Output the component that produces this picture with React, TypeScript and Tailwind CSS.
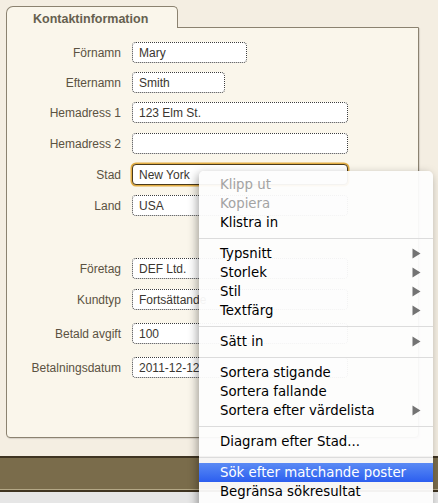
import React from 'react';

type Field = { label: string; value: string; width: string; mt: string; focused?: boolean };

const fields: Field[] = [
  { label: 'Förnamn', value: 'Mary', width: 'w-[115px]', mt: 'mt-0' },
  { label: 'Efternamn', value: 'Smith', width: 'w-[93px]', mt: 'mt-[9px]' },
  { label: 'Hemadress 1', value: '123 Elm St.', width: 'w-[216px]', mt: 'mt-[9px]' },
  { label: 'Hemadress 2', value: '', width: 'w-[216px]', mt: 'mt-[10px]' },
  { label: 'Stad', value: 'New York', width: 'w-[216px]', mt: 'mt-[10px]', focused: true },
  { label: 'Land', value: 'USA', width: 'w-[216px]', mt: 'mt-[10px]' },
  { label: 'Företag', value: 'DEF Ltd.', width: 'w-[216px]', mt: 'mt-[42px]' },
  { label: 'Kundtyp', value: 'Fortsättande', width: 'w-[216px]', mt: 'mt-[10px]' },
  { label: 'Betald avgift', value: '100', width: 'w-[216px]', mt: 'mt-[13px]' },
  { label: 'Betalningsdatum', value: '2011-12-12', width: 'w-[216px]', mt: 'mt-[13px]' },
];

type Item =
  | { sep: true }
  | { sep?: false; label: string; disabled?: boolean; sub?: boolean; active?: boolean };

const menu: Item[] = [
  { label: 'Klipp ut', disabled: true },
  { label: 'Kopiera', disabled: true },
  { label: 'Klistra in' },
  { sep: true },
  { label: 'Typsnitt', sub: true },
  { label: 'Storlek', sub: true },
  { label: 'Stil', sub: true },
  { label: 'Textfärg', sub: true },
  { sep: true },
  { label: 'Sätt in', sub: true },
  { sep: true },
  { label: 'Sortera stigande' },
  { label: 'Sortera fallande' },
  { label: 'Sortera efter värdelista', sub: true },
  { sep: true },
  { label: 'Diagram efter Stad...' },
  { sep: true },
  { label: 'Sök efter matchande poster', active: true },
  { label: 'Begränsa sökresultat' },
];

function Arrow() {
  return (
    <svg width="9" height="11" viewBox="0 0 9 11" className="shrink-0">
      <path d="M0.5 0.5 L8.5 5.5 L0.5 10.5 Z" fill="#737373" />
    </svg>
  );
}

export default function App() {
  return (
    <div className="relative w-[438px] h-[503px] overflow-hidden bg-[#f4eee2] font-['Liberation_Sans',Arial,sans-serif]">
      <div className="pt-[6px] pl-[6px]">
        <div className="relative z-10 w-[172px] h-[22px] -mb-px border border-b-0 border-[#8b8270] rounded-tl-[7px] rounded-tr-[5px] bg-[#faf6eb] pl-[26px] pt-[3px] text-[12.5px] font-bold text-[#66604f]">
          Kontaktinformation
        </div>
        <div className="w-[413px] h-[411px] border border-[#8b8270] rounded-b-[4px] bg-[#faf6eb] shadow-[1px_1px_1px_rgba(0,0,0,0.12)] pt-[14px]">
          {fields.map((f) => (
            <div key={f.label} className={`flex items-center ${f.mt}`}>
              <div className="w-[114px] text-right text-[12px] text-[#5b5242]">{f.label}</div>
              <div
                className={`ml-[11px] h-[21px] ${f.width} rounded-[4px] bg-white flex items-center px-[6px] text-[12px] text-[#3a3630] ${
                  f.focused
                    ? 'border border-[#4a3a1c] shadow-[0_0_0_1.5px_#e3ae45]'
                    : 'border border-dotted border-[#3d3d3d]'
                }`}
              >
                {f.value}
              </div>
            </div>
          ))}
        </div>
      </div>
      <div className="mt-[18px] h-[36px] bg-[#7a6c4b] border-t-[2px] border-t-[#3f3421] border-b-[2px] border-b-[#3f3421] shadow-[inset_0_-1px_0_#b4a886]" />
      <div className="h-[12px] bg-[#e6e6e6]" />

      <div className="absolute left-[199px] top-[171px] w-[234px] h-[340px] rounded-[5px] bg-[#fdfdfd]/95 shadow-[-2px_3px_10px_rgba(0,0,0,0.35)] pt-[4px] text-[13.3px] font-['DejaVu_Sans',sans-serif]">
        {menu.map((m, i) =>
          m.sep ? (
            <div key={i} className="h-[12px] flex items-center">
              <div className="w-full h-px bg-[#dcdcdc]" />
            </div>
          ) : (
            <div
              key={i}
              className={`h-[19px] flex items-center justify-between pl-[21px] pr-[12px] ${
                m.active ? 'bg-gradient-to-b from-[#5b8af4] to-[#2c5eef] text-white' : m.disabled ? 'text-[#a3a3a3]' : 'text-black'
              }`}
            >
              <span>{m.label}</span>
              {m.sub && <Arrow />}
            </div>
          )
        )}
      </div>
    </div>
  );
}
